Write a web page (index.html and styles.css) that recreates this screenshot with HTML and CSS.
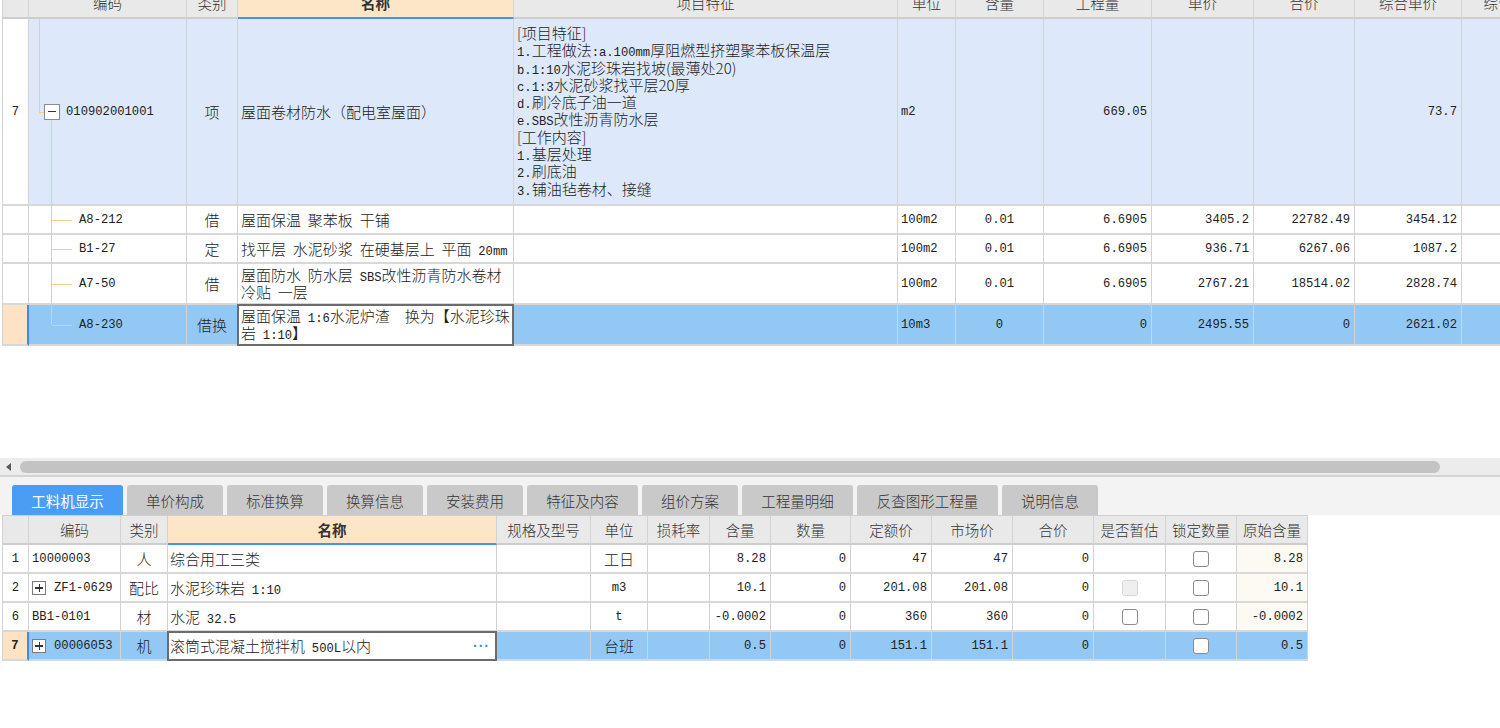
FILE: index.html
```html
<!DOCTYPE html>
<html lang="zh-CN">
<head>
<meta charset="utf-8">
<title>工料机显示</title>
<link rel="stylesheet" href="styles.css">
</head>
<body>
<div class="top">
  <div class="top-scroll">
    <div class="row hdr">
      <div class="c"></div>
      <div class="c">编码</div>
      <div class="c">类别</div>
      <div class="c name-h">名称</div>
      <div class="c">项目特征</div>
      <div class="c">单位</div>
      <div class="c">含量</div>
      <div class="c">工程量</div>
      <div class="c">单价</div>
      <div class="c">合价</div>
      <div class="c">综合单价</div>
      <div class="c">综合合价</div>
    </div>
    <div class="row r-qd">
      <div class="c rn n">7</div>
      <div class="c code root"><span class="tog minus"></span><span class="n">010902001001</span></div>
      <div class="c ctr">项</div>
      <div class="c nm">屋面卷材防水（配电室屋面）</div>
      <div class="c feat">
        <div class="ln">[项目特征]</div>
        <div class="ln"><span class="a">1.</span>工程做法<span class="a">:a.100mm</span>厚阻燃型挤塑聚苯板保温层</div>
        <div class="ln"><span class="a">b.1:10</span>水泥珍珠岩找坡(最薄处20)</div>
        <div class="ln"><span class="a">c.1:3</span>水泥砂浆找平层20厚</div>
        <div class="ln"><span class="a">d.</span>刷冷底子油一道</div>
        <div class="ln"><span class="a">e.SBS</span>改性沥青防水层</div>
        <div class="ln">[工作内容]</div>
        <div class="ln"><span class="a">1.</span>基层处理</div>
        <div class="ln"><span class="a">2.</span>刷底油</div>
        <div class="ln"><span class="a">3.</span>铺油毡卷材、接缝</div>
      </div>
      <div class="c unit n">m2</div>
      <div class="c"></div>
      <div class="c num n">669.05</div>
      <div class="c"></div>
      <div class="c"></div>
      <div class="c num n">73.7</div>
      <div class="c"></div>
    </div>
    <div class="row h29">
      <div class="c rn"></div>
      <div class="c code leaf"><span class="n">A8-212</span></div>
      <div class="c ctr">借</div>
      <div class="c nm">屋面保温 聚苯板 干铺</div>
      <div class="c"></div>
      <div class="c unit n">100m2</div>
      <div class="c ctr n">0.01</div>
      <div class="c num n">6.6905</div>
      <div class="c num n">3405.2</div>
      <div class="c num n">22782.49</div>
      <div class="c num n">3454.12</div>
      <div class="c"></div>
    </div>
    <div class="row h29">
      <div class="c rn"></div>
      <div class="c code leaf"><span class="n">B1-27</span></div>
      <div class="c ctr">定</div>
      <div class="c nm"><span class="t">找平层 水泥砂浆 在硬基层上 平面 <span class="a">20mm</span></span></div>
      <div class="c"></div>
      <div class="c unit n">100m2</div>
      <div class="c ctr n">0.01</div>
      <div class="c num n">6.6905</div>
      <div class="c num n">936.71</div>
      <div class="c num n">6267.06</div>
      <div class="c num n">1087.2</div>
      <div class="c"></div>
    </div>
    <div class="row h41">
      <div class="c rn"></div>
      <div class="c code leaf"><span class="n">A7-50</span></div>
      <div class="c ctr">借</div>
      <div class="c nm two"><div class="t"><div class="ln2">屋面防水 防水层 <span class="a">SBS</span>改性沥青防水卷材</div><div class="ln2">冷贴 一层</div></div></div>
      <div class="c"></div>
      <div class="c unit n">100m2</div>
      <div class="c ctr n">0.01</div>
      <div class="c num n">6.6905</div>
      <div class="c num n">2767.21</div>
      <div class="c num n">18514.02</div>
      <div class="c num n">2828.74</div>
      <div class="c"></div>
    </div>
    <div class="row h41 sel">
      <div class="c rn"></div>
      <div class="c code leaf last"><span class="n">A8-230</span></div>
      <div class="c ctr">借换</div>
      <div class="c nm two edit"><div class="t"><div class="ln2">屋面保温 <span class="a">1:6</span>水泥炉渣　换为【水泥珍珠</div><div class="ln2">岩 <span class="a">1:10</span>】</div></div></div>
      <div class="c"></div>
      <div class="c unit n">10m3</div>
      <div class="c ctr n">0</div>
      <div class="c num n">0</div>
      <div class="c num n">2495.55</div>
      <div class="c num n">0</div>
      <div class="c num n">2621.02</div>
      <div class="c"></div>
    </div>
  </div>
</div>

<div class="blank"></div>

<div class="hs">
  <span class="arrow"></span>
  <div class="thumb"></div>
</div>

<div class="panel">
  <div class="tab on w111">工料机显示</div>
  <div class="tab w96">单价构成</div>
  <div class="tab w96">标准换算</div>
  <div class="tab w96">换算信息</div>
  <div class="tab w96">安装费用</div>
  <div class="tab w111">特征及内容</div>
  <div class="tab w96">组价方案</div>
  <div class="tab w111">工程量明细</div>
  <div class="tab w141">反查图形工程量</div>
  <div class="tab w96">说明信息</div>
</div>

<div class="bot">
  <div class="row hdr">
    <div class="c"></div>
    <div class="c">编码</div>
    <div class="c">类别</div>
    <div class="c name-h">名称</div>
    <div class="c">规格及型号</div>
    <div class="c">单位</div>
    <div class="c">损耗率</div>
    <div class="c">含量</div>
    <div class="c">数量</div>
    <div class="c">定额价</div>
    <div class="c">市场价</div>
    <div class="c">合价</div>
    <div class="c">是否暂估</div>
    <div class="c">锁定数量</div>
    <div class="c">原始含量</div>
  </div>
  <div class="row">
    <div class="c rn n">1</div>
    <div class="c bcode n">10000003</div>
    <div class="c ctr">人</div>
    <div class="c bname">综合用工三类</div>
    <div class="c"></div>
    <div class="c ctr">工日</div>
    <div class="c"></div>
    <div class="c num n">8.28</div>
    <div class="c num n">0</div>
    <div class="c num n">47</div>
    <div class="c num n">47</div>
    <div class="c num n">0</div>
    <div class="c"></div>
    <div class="c ctr"><span class="cb"></span></div>
    <div class="c num n orig">8.28</div>
  </div>
  <div class="row">
    <div class="c rn n">2</div>
    <div class="c bcode"><span class="tog plus sm"></span><span class="n">ZF1-0629</span></div>
    <div class="c ctr">配比</div>
    <div class="c bname"><span class="t">水泥珍珠岩 <span class="a">1:10</span></span></div>
    <div class="c"></div>
    <div class="c ctr n">m3</div>
    <div class="c"></div>
    <div class="c num n">10.1</div>
    <div class="c num n">0</div>
    <div class="c num n">201.08</div>
    <div class="c num n">201.08</div>
    <div class="c num n">0</div>
    <div class="c ctr"><span class="cb dis"></span></div>
    <div class="c ctr"><span class="cb"></span></div>
    <div class="c num n orig">10.1</div>
  </div>
  <div class="row">
    <div class="c rn n">6</div>
    <div class="c bcode n">BB1-0101</div>
    <div class="c ctr">材</div>
    <div class="c bname"><span class="t">水泥 <span class="a">32.5</span></span></div>
    <div class="c"></div>
    <div class="c ctr n">t</div>
    <div class="c"></div>
    <div class="c num n">-0.0002</div>
    <div class="c num n">0</div>
    <div class="c num n">360</div>
    <div class="c num n">360</div>
    <div class="c num n">0</div>
    <div class="c ctr"><span class="cb"></span></div>
    <div class="c ctr"><span class="cb"></span></div>
    <div class="c num n orig">-0.0002</div>
  </div>
  <div class="row sel">
    <div class="c rn n bold">7</div>
    <div class="c bcode"><span class="tog plus sm"></span><span class="n">00006053</span></div>
    <div class="c ctr">机</div>
    <div class="c bname edit"><span class="t">滚筒式混凝土搅拌机 <span class="a">500L</span>以内</span><span class="more">···</span></div>
    <div class="c"></div>
    <div class="c ctr">台班</div>
    <div class="c"></div>
    <div class="c num n">0.5</div>
    <div class="c num n">0</div>
    <div class="c num n">151.1</div>
    <div class="c num n">151.1</div>
    <div class="c num n">0</div>
    <div class="c"></div>
    <div class="c ctr"><span class="cb"></span></div>
    <div class="c num n">0.5</div>
  </div>
</div>
</body>
</html>
```

FILE: styles.css
```css
* { box-sizing: border-box; }
html, body { margin: 0; padding: 0; }
body {
  width: 1500px;
  height: 728px;
  overflow: hidden;
  background: #fff;
  font-family: "Noto Sans CJK SC", "Liberation Sans", sans-serif;
  font-size: 15px;
  font-weight: 300;
  color: #222;
}
.a, .n {
  font-family: "Liberation Mono", "Noto Sans CJK SC", monospace;
  font-size: 12.2px;
  font-weight: 400;
  word-spacing: 0;
}
.a { line-height: 1; }
.bold { font-weight: bold; }
.t { white-space: nowrap; }
.nm, .bname { word-spacing: 3.5px; }

/* ---------- generic grid ---------- */
.row { display: grid; }
.c {
  position: relative;
  display: flex;
  align-items: center;
  padding: 0 4px;
  border-right: 1px solid #d3d3d3;
  border-bottom: 2px solid #d8d8d8;
  white-space: nowrap;
  min-width: 0;
  min-height: 0;
}
.ctr { justify-content: center; }
.num { justify-content: flex-end; }
.unit { padding-left: 3px; }
.hdr .c {
  background: #e9e9e9;
  justify-content: center;
  color: #333;
  font-size: 14.5px;
  border-bottom-color: #cdcdcd;
}
.hdr .name-h {
  background: #fde6c7;
  border-bottom-color: #3d97ee;
  font-weight: bold;
}
.rn { justify-content: center; background: #fff; padding: 0; }

/* ---------- top grid ---------- */
.top {
  height: 346px;
  overflow: hidden;
  margin-left: 2px;
  border-left: 1px solid #d3d3d3;
}
.top-scroll { margin-top: -12px; }
.top .row {
  grid-template-columns: 26px 158px 51px 276px 384px 58px 88px 108px 102px 101px 107px 102px;
  grid-template-rows: 100%;
}
.top .hdr { height: 31px; }
.r-qd { height: 187px; }
.h29 { height: 29px; }
.h41 { height: 41px; }

.r-qd .c { background: #dde9fb; }
.r-qd .rn { background: #fff; }

.nm { padding-left: 3px; }
.feat {
  display: block;
  padding: 5px 0 0 3px;
}
.ln {
  height: 17.3px;
  line-height: 17.3px;
  white-space: nowrap;
}
.ln2 {
  height: 16.5px;
  line-height: 16.5px;
  white-space: nowrap;
}

/* tree */
.code { padding-left: 0; }
.tog {
  position: relative;
  flex: none;
  width: 16px;
  height: 16px;
  border: 1px solid #8c8c8c;
  background: #fff;
}
.tog::before {
  content: "";
  position: absolute;
  left: 3px;
  right: 3px;
  top: 6px;
  height: 1.5px;
  background: #333;
}
.tog.plus::after {
  content: "";
  position: absolute;
  top: 3px;
  bottom: 3px;
  left: 6px;
  width: 1.5px;
  background: #333;
}
.root .tog { margin-left: 15px; margin-right: 6px; }
.root::before {
  content: "";
  position: absolute;
  left: 10px;
  top: 0;
  width: 5px;
  height: 93px;
  border-left: 1px solid #ffc784;
  border-bottom: 1px solid #ffc784;
}
.root::after {
  content: "";
  position: absolute;
  left: 22px;
  top: 101px;
  bottom: -2px;
  border-left: 1px solid #ffc784;
}
.leaf { padding-left: 50px; }
.leaf::before {
  content: "";
  position: absolute;
  left: 22px;
  top: 0;
  bottom: -2px;
  border-left: 1px solid #ffc784;
}
.leaf.last::before { bottom: 50%; }
.leaf::after {
  content: "";
  position: absolute;
  left: 23px;
  width: 20px;
  top: 50%;
  border-top: 1px solid #ffc784;
}

/* selection */
.sel .c { background: #93c8f5; }
.sel .rn { background: #fde2c3; border-right: 2px solid #3a8de6; }
.sel .c.edit { background: #fff; }
.edit::after {
  content: "";
  position: absolute;
  left: -1px;
  top: -1px;
  right: -1px;
  bottom: -2px;
  border: 2px solid #6c6c6c;
  pointer-events: none;
}

/* ---------- blank + scrollbar ---------- */
.blank { height: 112px; }
.hs {
  height: 19px;
  background: #ececec;
  display: flex;
  align-items: center;
  border-bottom: 2px solid #d4d4d4;
}
.arrow {
  width: 0;
  height: 0;
  margin-left: 6px;
  border-right: 5px solid #5a5a5a;
  border-top: 4px solid transparent;
  border-bottom: 4px solid transparent;
}
.thumb {
  margin-left: 9px;
  width: 1420px;
  height: 12px;
  border-radius: 6px;
  background: #c3c3c3;
}

/* ---------- tabs ---------- */
.panel {
  height: 38px;
  background: #f3f3f3;
  display: flex;
  align-items: flex-end;
  gap: 4px;
  padding-left: 12px;
}
.tab {
  height: 30px;
  display: flex;
  align-items: center;
  justify-content: center;
  background: #c9c9c9;
  color: #333;
  font-size: 14.5px;
  border-radius: 3px 3px 0 0;
}
.tab.on { background: #4a9df5; color: #fff; font-weight: 400; }
.w96 { width: 96px; }
.w111 { width: 111px; }
.w141 { width: 141px; }

/* ---------- bottom grid ---------- */
.bot {
  width: 1306px;
  margin-left: 2px;
  border-left: 1px solid #d3d3d3;
  border-top: 1px solid #cfcfcf;
}
.bot .row {
  grid-template-columns: 26px 92px 47px 329px 94px 57px 62px 61px 80px 81px 81px 81px 72px 71px 71px;
  grid-template-rows: 100%;
  height: 29px;
}
.bcode { padding-left: 3px; }
.bcode .tog.sm {
  width: 14px;
  height: 14px;
  margin-left: 0;
  margin-right: 8px;
  border-color: #7a7a7a;
}
.bcode .tog.sm::before { left: 2px; right: 2px; top: 5.5px; }
.bcode .tog.sm::after { top: 2px; bottom: 2px; left: 5.5px; }
.bname { padding-left: 2px; }
.bname.edit { justify-content: space-between; padding-right: 6px; }
.more {
  color: #3a8be2;
  font-family: "Liberation Sans", sans-serif;
  font-weight: bold;
  font-size: 14px;
  letter-spacing: 1px;
}
.orig { background: #fdf9f3; }
.sel .orig { background: #93c8f5; }
.cb {
  display: block;
  width: 16px;
  height: 16px;
  border: 1px solid #8a8a8a;
  border-radius: 3px;
  background: #fff;
}
.cb.dis {
  border-color: #d6d6d6;
  background: #efefef;
}
```
